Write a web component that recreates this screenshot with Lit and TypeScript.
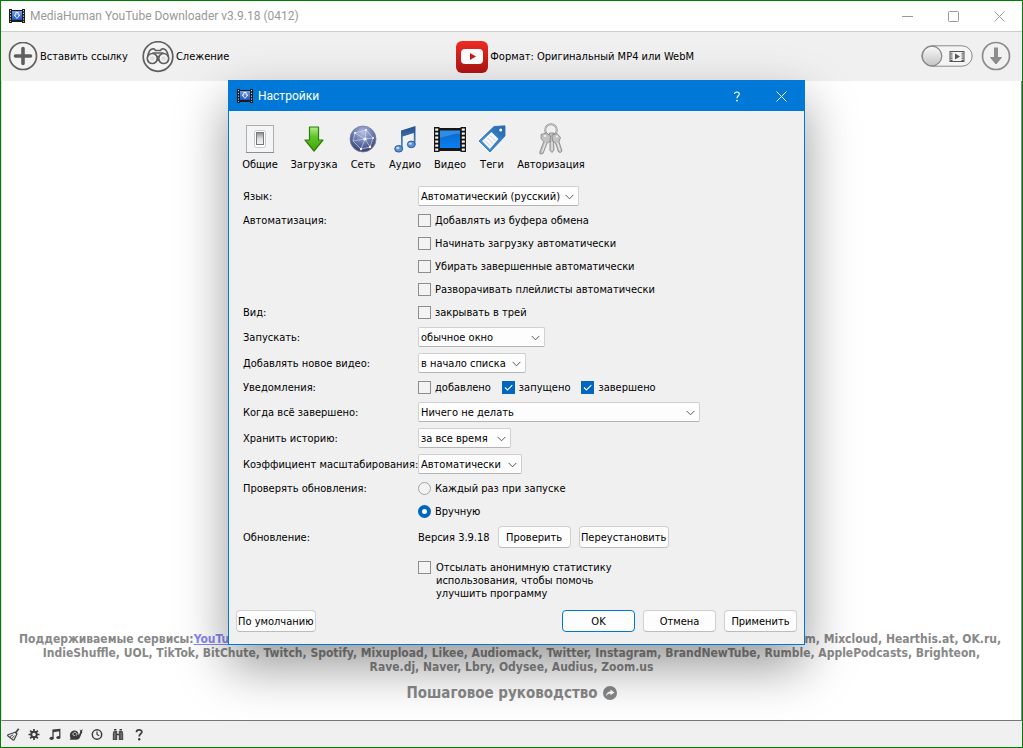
import { LitElement, html, css, svg } from "lit";
import { customElement } from "lit/decorators.js";

const appIcon = html`<svg width="16" height="14" viewBox="0 0 16 14" aria-hidden="true">
  <defs><linearGradient id="ai" x1="0" y1="0" x2="0" y2="1"><stop offset="0" stop-color="#6f9ef2"/><stop offset="1" stop-color="#1d52c4"/></linearGradient></defs>
  <rect width="3" height="14" fill="#1b1b1b"/><rect x="13" width="3" height="14" fill="#1b1b1b"/>
  <rect x="3" y="1" width="10" height="12" fill="#1b1b1b"/>
  <rect x="3" y="2" width="10" height="9" fill="url(#ai)"/>
  <path d="M1.500 1v12M14.500 1v12" stroke="#d8d8d8" stroke-width="1" stroke-dasharray="1.200 1.600"/>
  <path d="M6.800 3.500h2.400v2.500h1.600L8 9.400 5.200 6h1.600z" fill="none" stroke="#fff" stroke-width=".9"/>
</svg>`;

const strip = (x: number) => [1, 5, 9, 13, 17, 21].map((y) => svg`<rect x=${x} y=${y + 0.5} width="3" height="2.2" fill="#f4f4f4"/>`);

const tabs = [
  {
    name: "Общие", size: 36,
    icon: html`<svg width="28" height="28" viewBox="0 0 28 28" aria-hidden="true">
      <defs><linearGradient id="g1" x1="0" y1="0" x2="0" y2="1"><stop offset="0" stop-color="#888"/><stop offset=".5" stop-color="#ddd"/><stop offset="1" stop-color="#f4f4f4"/></linearGradient></defs>
      <rect x=".5" y=".5" width="27" height="27" fill="#f4f5f6" stroke="#aaaeb2"/>
      <path d="M0 27.500h28" stroke="#8b8f93"/>
      <rect x="8.500" y="5.500" width="11" height="17" rx="2" fill="#fff" stroke="#c9c9c9"/>
      <rect x="10.500" y="7.500" width="7" height="12" fill="url(#g1)" stroke="#777"/>
    </svg>`,
  },
  {
    name: "Загрузка", size: 46,
    icon: html`<svg width="20" height="26" viewBox="0 0 20 26" aria-hidden="true">
      <defs><linearGradient id="g2" x1="0" y1="0" x2="0" y2="1"><stop offset="0" stop-color="#b4f08a"/><stop offset=".4" stop-color="#5ec62a"/><stop offset="1" stop-color="#3fa500"/></linearGradient></defs>
      <path d="M5.500 1h9v13h4.500L10 25 1 14h4.500z" fill="url(#g2)" stroke="#2f7d0c" stroke-width="1.200" stroke-linejoin="round"/>
    </svg>`,
  },
  {
    name: "Сеть", size: 26,
    icon: html`<svg width="28" height="28" viewBox="0 0 28 28" aria-hidden="true">
      <defs><radialGradient id="g3" cx=".5" cy=".25" r=".8"><stop offset="0" stop-color="#b6c0e2"/><stop offset=".5" stop-color="#6877ad"/><stop offset="1" stop-color="#2c3766"/></radialGradient></defs>
      <circle cx="14" cy="14" r="13" fill="url(#g3)" stroke="#77809f" stroke-width=".8"/>
      <g fill="none" stroke="#dbe2f5" stroke-width=".6"><path d="M6 8l11-3 7 8-8 1-10-6-2 8 12-2-4 10-8-8M16 14l5 8 3-9M12 24l9-2M17 5l-1 9"/></g>
      <g fill="#fff"><circle cx="16" cy="14" r="1.600"/><circle cx="6" cy="8" r="1"/><circle cx="17" cy="5" r="1"/><circle cx="24" cy="13" r="1"/><circle cx="12" cy="24" r="1.200"/><circle cx="21" cy="22" r="1.200"/></g>
    </svg>`,
  },
  {
    name: "Аудио", size: 32,
    icon: html`<svg width="22" height="27" viewBox="0 0 22 27" aria-hidden="true">
      <defs><linearGradient id="g4" x1="0" y1="0" x2="0" y2="1"><stop offset="0" stop-color="#275089"/><stop offset="1" stop-color="#4a8ad6"/></linearGradient></defs>
      <path d="M7 4.500L21.500 0v19h-1.700V7L8.700 10.500v12H7z" fill="url(#g4)"/>
      <ellipse cx="4.700" cy="22.800" rx="4" ry="3.300" fill="#5b90d2" stroke="#2c5c9c"/>
      <ellipse cx="17.300" cy="18.400" rx="3.900" ry="3.300" fill="#5b90d2" stroke="#2c5c9c"/>
      <ellipse cx="3.800" cy="22" rx="1.600" ry="1.200" fill="#c4dcf6"/><ellipse cx="16.300" cy="17.600" rx="1.600" ry="1.200" fill="#c4dcf6"/>
    </svg>`,
  },
  {
    name: "Видео", size: 32,
    icon: html`<svg width="32" height="25" viewBox="0 0 32 25" aria-hidden="true">
      <defs><linearGradient id="g5" x1="0" y1="0" x2="0" y2="1"><stop offset="0" stop-color="#0b68c8"/><stop offset="1" stop-color="#0a7ff0"/></linearGradient></defs>
      <rect width="5.500" height="25" fill="#161616"/><rect x="26.500" width="5.500" height="25" fill="#161616"/>
      <rect x="5" y="1" width="22" height="23" fill="#161616"/>
      <rect x="6" y="3.500" width="20" height="17.500" fill="url(#g5)"/>
      <path d="M6 3.500h20v3c-8 0-12 3-20 4z" fill="#56adf5" opacity=".5"/>
      ${strip(1.2)}${strip(27.8)}
    </svg>`,
  },
  {
    name: "Теги", size: 26,
    icon: html`<svg width="28" height="28" viewBox="0 0 28 28" aria-hidden="true">
      <defs><linearGradient id="g6" x1="1" y1="0" x2="0" y2="1"><stop offset="0" stop-color="#2567ae"/><stop offset="1" stop-color="#4a9be2"/></linearGradient></defs>
      <path d="M16 1.500L27 .800 27 11 12 27 1 16z" fill="url(#g6)" stroke="#2b6cae" stroke-width=".8" stroke-linejoin="round"/>
      <path d="M13.500 7L20.500 14 11.800 24 4 16z" fill="#f7f8fa"/>
      <path d="M7 15.500l5.500 5.500M9.500 13l5.500 5.500M12 10.500l5.500 5.500" stroke="#c7ccd2"/>
      <circle cx="22.700" cy="5" r="1.500" fill="#fff"/>
    </svg>`,
  },
  {
    name: "Авторизация", size: 66,
    icon: html`<svg width="24" height="32" viewBox="0 0 24 32" aria-hidden="true">
      <circle cx="12" cy="7" r="5.800" fill="none" stroke="#999" stroke-width="2"/><circle cx="12" cy="7" r="5.800" fill="none" stroke="#d0d0d0" stroke-width=".7"/>
      <g fill="#c3c3c3" stroke="#808080" stroke-width=".8">
        <path d="M10.500 10h4.500l1.500 6-2 2 .5 9-2 2.500-2-2v-9.500l-2-2z"/>
        <path d="M13 12l5-1.500 3.500 4-1.500 4 3 9.500-1.500 1.500-2-.5-3-9-3-2z"/>
        <path d="M2 11.500l5.500-1.500 4 3-.5 5.500-3 1.500-4 10.500-3 .5L.800 29l4-10.500L2.200 16z"/>
      </g>
      <circle cx="6" cy="13" r="1.100" fill="#f5f5f5"/><circle cx="18" cy="13.500" r="1" fill="#f5f5f5"/>
      <path d="M6.500 20l-3 8.500M18.500 20l2.500 7.500M13 19v8" stroke="#f0f0f0" stroke-width=".9"/>
    </svg>`,
  },
];

const statusIcons = [
  { label: "Очистить", icon: svg`<path d="M11.700 .8L8.300 5.200" stroke="#444" stroke-width="1.800"/><path d="M8 4.200L1 6.800c-.6.300-.4.900 0 1.200l4.800 3.800c.5.400 1 .3 1.300-.2L10 6z" fill="#f0f0f0" stroke="#444" stroke-width="1.200"/><path d="M3 8.600l3.200-1.800M5 10.200l2.700-2.700" stroke="#444" stroke-width="1"/>` },
  { label: "Настройки", icon: svg`<circle cx="6" cy="6.500" r="2.700" fill="none" stroke="#3c3c3c" stroke-width="1.900"/><path d="M6 1v2.500M6 9.500V12M.500 6.500H3M9 6.500h2.500M2.100 2.600l1.600 1.600M8.300 8.800l1.600 1.600M9.900 2.600L8.300 4.200M3.700 8.800l-1.600 1.600" stroke="#3c3c3c" stroke-width="1.700"/>` },
  { label: "Аудио", icon: svg`<path d="M4 10V2.200L10.800 1.500V9M4 3.500l6.800-.8" fill="none" stroke="#3c3c3c" stroke-width="1.300"/><ellipse cx="2.600" cy="10.300" rx="2.100" ry="1.600" fill="#3c3c3c"/><ellipse cx="9.400" cy="9.500" rx="2.100" ry="1.600" fill="#3c3c3c"/>` },
  { label: "Ограничение скорости", icon: svg`<path d="M-1 11.700c1.500-.2 1.800-1 1-3.200C-.500 5 1.500 2.500 4.500 2.500S8.600 4.500 8.500 7c1-.5 1.500-2 1.700-4L9.600 1l1.300 1.400L12.800 1 12 3.300c.8 1-.2 2-.8 3C10.200 9 9.500 11.700 6.500 11.700z" fill="#3c3c3c"/><path d="M6.500 7.500a2 2 0 1 0-3.600-1 1.500 1.500 0 0 0 2.400.7" fill="none" stroke="#eee" stroke-width=".8"/>` },
  { label: "Расписание", icon: svg`<circle cx="6" cy="6.500" r="4.700" fill="none" stroke="#3c3c3c" stroke-width="1.500"/><path d="M6 3.500v3l2.200 1.200" fill="none" stroke="#3c3c3c" stroke-width="1.200"/>` },
  { label: "Поиск", icon: svg`<path d="M1.500 3h3.700v9H.800V5.500zM10.500 3H6.800v9h4.400V5.500z" fill="#4c4c4c"/><path d="M2 1.700h2.500M7.500 1.700H10M5 6.500h2" stroke="#3c3c3c" stroke-width="1.500"/><path d="M2.800 4.500v6.500M9.200 4.500v6.500" stroke="#999" stroke-width=".7"/>` },
  { label: "Справка", icon: svg`<path d="M3.500 4.200C3.500 1 9 1.200 8.800 4 8.700 6 6.200 5.900 6.200 8.600" fill="none" stroke="#3c3c3c" stroke-width="1.800"/><circle cx="6.200" cy="11.200" r="1.200" fill="#3c3c3c"/>` },
];

@customElement("settings-dialog")
export class SettingsDialog extends LitElement {
  static styles = css`
    :host { display: block; box-sizing: border-box; border: 1px solid #0078d7; background: #f0f0f0; color: #000;
      box-shadow: 0 22px 48px rgba(0, 0, 0, 0.4); white-space: nowrap; }
    button, select, input { font: inherit; color: inherit; margin: 0; box-sizing: border-box; }
    .title { display: flex; align-items: center; height: 30px; padding-left: 8px; background: #0078d7; color: #fff; }
    .name { flex: 1; margin: 0 0 0 5px; font: 400 12px/16px Roboto, "Open Sans", sans-serif; }
    .win { display: flex; align-items: center; justify-content: center; width: 45px; height: 28px; padding: 0; border: 0; background: none; color: #fff; }
    .tabs { display: flex; gap: 13px; padding: 12px 13px 0; }
    .tab { display: flex; flex-direction: column; align-items: center; width: var(--w); padding: 0; border: 0; background: none; }
    .pic { display: flex; align-items: center; justify-content: center; height: 32px; margin-bottom: 3px; }
    .form { display: grid; grid-template-columns: 175px 1fr; row-gap: 6px; padding: 15px 14px 0; align-items: center; }
    .field { grid-column: 2; display: flex; align-items: center; }
    .field.checks { gap: 11px; }
    .field.update { gap: 8px; }
    .opt { display: flex; align-items: center; gap: 4px; height: 17px; }
    .stats { grid-column: 2; display: flex; align-items: flex-start; gap: 5px; margin-top: 7px; }
    .tick, .radio { appearance: none; flex: none; width: 13px; height: 13px; border: 1px solid #8d8d8d; background: #f3f3f3; }
    .tick:checked { border-color: #0067c0; background: #0067c0 url("data:image/svg+xml,%3Csvg xmlns='http://www.w3.org/2000/svg' viewBox='0 0 11 11'%3E%3Cpath d='M2 5.500l2.500 2.500L9.300 3.200' fill='none' stroke='white' stroke-width='1.100'/%3E%3C/svg%3E") center / 11px no-repeat; }
    .radio { border-color: #a4a4a4; border-radius: 50%; }
    .radio:checked { border: 4px solid #0067c0; background: #fff; }
    .drop { appearance: none; width: var(--w); height: 20px; padding: 0 14px 0 2px; border: 1px solid #d0d0d0; border-bottom-color: #b4b4b4; border-radius: 2px;
      background: #fdfdfd url("data:image/svg+xml,%3Csvg xmlns='http://www.w3.org/2000/svg' viewBox='0 0 10 6'%3E%3Cpath d='M.7.700L5 5 9.300.700' fill='none' stroke='%23555' stroke-width='1.100'/%3E%3C/svg%3E") right 4px top 7px / 9px 6px no-repeat; }
    .btn { min-width: 73px; height: 22px; padding: 0 1px; border: 1px solid #d0d0d0; border-bottom-color: #bcbcbc; border-radius: 4px; background: #fdfdfd; }
    .btn.main { border-color: #0078d4; }
    .btn.wide { min-width: 90px; }
    .btn.reset { min-width: 79px; margin-right: auto; }
    .foot { display: flex; gap: 8px; padding: 10px 7px 12px; }
  `;

  private text(label: string) { return html`<span>${label}</span>`; }

  private drop(label: string, value: string, width: number) {
    const id = "d" + label.length;
    return html`<label for=${id}>${label}</label>
      <div class="field"><select class="drop" id=${id} style="--w:${width}px"><option>${value}</option></select></div>`;
  }

  private tick(label: string, on = false) {
    return html`<label class="opt"><input class="tick" type="checkbox" .checked=${on} />${label}</label>`;
  }

  render() {
    return html`
      <header class="title">${appIcon}
        <h2 class="name">Настройки</h2>
        <button class="win" aria-label="Справка"><svg width="8" height="11" viewBox="0 0 8 11"><path d="M1.500 3C1.500.300 6.500.400 6.300 3 6.200 4.800 4 4.800 4 7.300" fill="none" stroke="#fff" stroke-width="1.200"/><circle cx="4" cy="9.600" r=".9" fill="#fff"/></svg></button>
        <button class="win" aria-label="Закрыть"><svg width="11" height="11" viewBox="0 0 11 11"><path d="M.500.500l10 10M10.500.500l-10 10" stroke="#fff"/></svg></button>
      </header>
      <nav class="tabs">${tabs.map((t) => html`<button class="tab" style="--w:${t.size}px"><span class="pic">${t.icon}</span>${t.name}</button>`)}</nav>
      <div class="form">
        ${this.drop("Язык:", "Автоматический (русский)", 161)}
        ${this.text("Автоматизация:")}
        <div class="field">${this.tick("Добавлять из буфера обмена")}</div>
        <div class="field">${this.tick("Начинать загрузку автоматически")}</div>
        <div class="field">${this.tick("Убирать завершенные автоматически")}</div>
        <div class="field">${this.tick("Разворачивать плейлисты автоматически")}</div>
        ${this.text("Вид:")}
        <div class="field">${this.tick("закрывать в трей")}</div>
        ${this.drop("Запускать:", "обычное окно", 127)}
        ${this.drop("Добавлять новое видео:", "в начало списка", 108)}
        ${this.text("Уведомления:")}
        <div class="field checks">${this.tick("добавлено")}${this.tick("запущено", true)}${this.tick("завершено", true)}</div>
        ${this.drop("Когда всё завершено:", "Ничего не делать", 282)}
        ${this.drop("Хранить историю:", "за все время", 93)}
        ${this.drop("Коэффициент масштабирования:", "Автоматически", 104)}
        ${this.text("Проверять обновления:")}
        <div class="field"><label class="opt"><input class="radio" type="radio" name="upd" />Каждый раз при запуске</label></div>
        <div class="field"><label class="opt"><input class="radio" type="radio" name="upd" checked />Вручную</label></div>
        ${this.text("Обновление:")}
        <div class="field update">Версия 3.9.18<button class="btn">Проверить</button><button class="btn wide">Переустановить</button></div>
        <label class="stats"><input class="tick" type="checkbox" /><span>Отсылать анонимную статистику<br />использования, чтобы помочь<br />улучшить программу</span></label>
      </div>
      <footer class="foot">
        <button class="btn reset">По умолчанию</button>
        <button class="btn main">OK</button>
        <button class="btn">Отмена</button>
        <button class="btn">Применить</button>
      </footer>`;
  }
}

@customElement("app-root")
export class AppRoot extends LitElement {
  static styles = css`
    :host { display: flex; flex-direction: column; position: relative; box-sizing: border-box; min-height: 100vh; overflow: hidden;
      border: 1px solid #008000; background: #f0f0f0; color: #000; font: 11px/13px "DejaVu Sans Condensed", "Noto Sans", sans-serif; white-space: nowrap; }
    button { font: inherit; color: inherit; margin: 0; padding: 0; border: 0; background: none; }
    .title { display: flex; align-items: center; height: 30px; padding-left: 8px; background: #fff; border-bottom: 1px solid #ccc; color: #999; }
    .name { flex: 1; margin: 0 0 0 5px; font: 400 12px/16px Roboto, "Open Sans", sans-serif; }
    .win { display: flex; align-items: center; justify-content: center; width: 46px; height: 28px; }
    .bar { display: flex; align-items: center; justify-content: space-between; height: 49px; padding: 0 11px 0 7px; }
    .group { display: flex; align-items: center; gap: 14px; }
    .group.right { gap: 8px; }
    .tool { display: flex; align-items: center; gap: 2px; }
    .main { flex: 1; display: flex; flex-direction: column; justify-content: flex-end; background: #fff; border-right: 1px solid #828790; border-left: 1px solid #dcdcdc; border-bottom: 1px solid #73787f; padding-bottom: 18px; color: #888; }
    .services { display: flex; flex-direction: column; align-items: center; margin: 0; font: bold 12px/14px "DejaVu Sans Condensed", "Noto Sans", sans-serif; }
    .first { display: flex; justify-content: space-between; align-self: stretch; padding: 0 20px 0 17px; }
    .link { color: #8888f0; text-decoration: underline; }
    .guide { display: flex; align-items: center; justify-content: center; gap: 5px; margin-top: 10px; color: #888; text-decoration: none; font: bold 15px/18px "DejaVu Sans Condensed", "Noto Sans", sans-serif; }
    .status { display: flex; align-items: center; gap: 9px; height: 26px; padding-left: 6px; }
    .mini { display: flex; }
    .mini svg { overflow: visible; }
    .dialog { position: absolute; left: 227px; top: 79px; width: 577px; }
  `;

  render() {
    return html`
      <header class="title">${appIcon}
        <h1 class="name">MediaHuman YouTube Downloader v3.9.18 (0412)</h1>
        <button class="win" aria-label="Свернуть"><svg width="11" height="11"><path d="M0 5.500h11" stroke="#999"/></svg></button>
        <button class="win" aria-label="Развернуть"><svg width="11" height="11"><rect x=".5" y=".5" width="10" height="10" rx="1" fill="none" stroke="#999"/></svg></button>
        <button class="win" aria-label="Закрыть"><svg width="11" height="11"><path d="M.500.500l10 10M10.500.500l-10 10" stroke="#999"/></svg></button>
      </header>
      <div class="bar">
        <div class="group">
          <button class="tool"><svg width="30" height="30" viewBox="0 0 30 30"><circle cx="15" cy="14" r="13.500" fill="#f3f3f3" stroke="#5f5f5f" stroke-width="1.700"/><path d="M15 6.500v15M7.500 14h15" stroke="#5f5f5f" stroke-width="3.600" stroke-linecap="round"/></svg>Вставить ссылку</button>
          <button class="tool"><svg width="32" height="32" viewBox="0 0 32 32"><circle cx="16" cy="15.500" r="14.800" fill="#f3f3f3" stroke="#5f5f5f" stroke-width="1.700"/>
            <g fill="none" stroke="#5f5f5f" stroke-width="1.700"><circle cx="10.300" cy="17.500" r="5"/><circle cx="21.700" cy="17.500" r="5"/><path d="M5.700 15.500C6.300 12 8 8.500 10 8c2-.5 3 .3 3.500 1.500h5c.5-1.200 1.500-2 3.500-1.500 2 .5 3.700 4 4.300 7.500M14.500 15.500h3M14.500 19h3M10.500 12h11"/></g><circle cx="10.300" cy="17.500" r="2.300" fill="#ddd"/><circle cx="21.700" cy="17.500" r="2.300" fill="#ddd"/></svg>Слежение</button>
        </div>
        <button class="tool"><svg width="32" height="32" viewBox="0 0 32 32"><defs><linearGradient id="yt" x1="0" y1="0" x2="0" y2="1"><stop offset="0" stop-color="#ee2d22"/><stop offset="1" stop-color="#ae1312"/></linearGradient></defs><rect width="32" height="32" rx="6" fill="url(#yt)"/><rect x="5" y="8" width="22" height="15" rx="4" fill="#fff"/><path d="M14 12v7l6-3.500z" fill="#c81c18"/></svg>Формат: Оригинальный MP4 или WebM</button>
        <div class="group right">
          <button class="mini" aria-label="Режим видео"><svg width="52" height="24" viewBox="0 0 52 24"><defs><linearGradient id="kn" x1="0" y1="0" x2="0" y2="1"><stop offset="0" stop-color="#fafafa"/><stop offset="1" stop-color="#c4c4c4"/></linearGradient></defs>
            <rect x=".8" y=".8" width="50.400" height="20.400" rx="10.200" fill="#f4f4f4" stroke="#8a8a8a"/><circle cx="11" cy="11" r="9.800" fill="url(#kn)" stroke="#858585" stroke-width="1.200"/>
            <rect x="29" y="6.500" width="14" height="10" fill="none" stroke="#555"/><path d="M30.500 6v11M41.500 6v11" stroke="#555" stroke-width="2" stroke-dasharray="1.200 1"/><path d="M34 8.500v6l5-3z" fill="#555"/></svg></button>
          <button class="mini" aria-label="Загрузить"><svg width="30" height="30" viewBox="0 0 30 30"><circle cx="15" cy="14" r="13.500" fill="#f1f1f1" stroke="#8c8c8c" stroke-width="1.700"/><path d="M15 5.500v11" stroke="#8c8c8c" stroke-width="4"/><path d="M9.500 15.500h11l-5.500 6.500z" fill="#8c8c8c" stroke="#8c8c8c" stroke-linejoin="round"/></svg></button>
        </div>
      </div>
      <main class="main">
        <div class="services">
          <div class="first"><span>Поддерживаемые сервисы:<a class="link" href="#">YouTube</a></span><span>Last.fm, Mixcloud, Hearthis.at, OK.ru,</span></div>
          <span>IndieShuffle, UOL, TikTok, BitChute, Twitch, Spotify, Mixupload, Likee, Audiomack, Twitter, Instagram, BrandNewTube, Rumble, ApplePodcasts, Brighteon,</span>
          <span>Rave.dj, Naver, Lbry, Odysee, Audius, Zoom.us</span>
        </div>
        <a class="guide" href="#">Пошаговое руководство<svg width="14" height="14" viewBox="0 0 14 14"><circle cx="7" cy="7" r="7" fill="#888"/><path d="M2.800 10.500C3.300 7 5 5.600 7.500 5.500V3.500L11.500 6.500 7.500 9.300V7.500C5.500 7.500 4.200 8.300 2.800 10.500z" fill="#fff"/></svg></a>
      </main>
      <footer class="status">${statusIcons.map((s) => html`<button class="mini" aria-label=${s.label}><svg width="12" height="13">${s.icon}</svg></button>`)}</footer>
      <settings-dialog class="dialog"></settings-dialog>`;
  }
}
